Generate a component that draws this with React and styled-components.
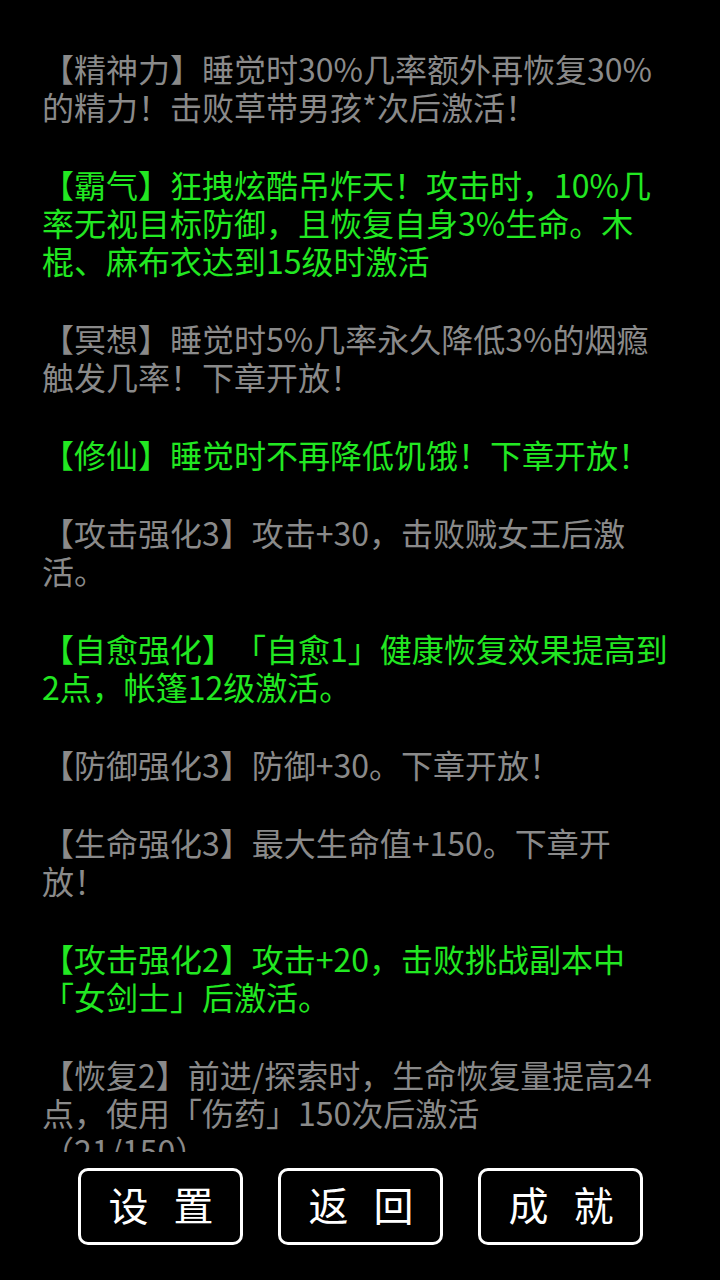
import React from 'react';
import styled, {createGlobalStyle} from 'styled-components';

const GlobalStyle = createGlobalStyle`
    html, body {
        margin: 0;
        padding: 0;
        background: #000;
    }
    * {
        box-sizing: border-box;
    }
`

const Screen = styled.div`
    width: 720px;
    height: 1280px;
    background: #000;
    display: flex;
    flex-direction: column;
    font-family: "Noto Sans CJK SC", "Noto Sans", sans-serif;
`

const TalentList = styled.div`
    flex: 1;
    overflow: hidden;
    padding: 49px 52px 0 42px;
`

const Talent = styled.p`
    margin: 0 0 40px 0;
    font-size: 32px;
    line-height: 38px;
    color: ${({active}) => active ? 'rgb(34, 232, 34)' : 'rgb(138, 138, 138)'};
    word-break: break-all;
    line-break: strict;
    text-spacing-trim: space-all;
`

const Footer = styled.div`
    height: 128px;
    display: flex;
    flex-direction: row;
    justify-content: center;
    gap: 35px;
    padding-top: 16px;
`

const Button = styled.div`
    width: 165px;
    height: 77px;
    border: 3px solid #fff;
    border-radius: 10px;
    display: flex;
    align-items: center;
    justify-content: center;
    color: #fff;
    font-size: 40px;
    line-height: 48px;
    letter-spacing: 8px;
    padding: 0 0 6px 10px;
`

const talents = [
    {active: false, text: '【精神力】睡觉时30%几率额外再恢复30%的精力！击败草带男孩*次后激活！'},
    {active: true, text: '【霸气】狂拽炫酷吊炸天！攻击时，10%几率无视目标防御，且恢复自身3%生命。木棍、麻布衣达到15级时激活'},
    {active: false, text: '【冥想】睡觉时5%几率永久降低3%的烟瘾触发几率！下章开放！'},
    {active: true, text: '【修仙】睡觉时不再降低饥饿！下章开放！'},
    {active: false, text: '【攻击强化3】攻击+30，击败贼女王后激活。'},
    {active: true, text: '【自愈强化】「自愈1」健康恢复效果提高到2点，帐篷12级激活。'},
    {active: false, text: '【防御强化3】防御+30。下章开放！'},
    {active: false, text: '【生命强化3】最大生命值+150。下章开放！'},
    {active: true, text: '【攻击强化2】攻击+20，击败挑战副本中「女剑士」后激活。'},
    {active: false, text: '【恢复2】前进/探索时，生命恢复量提高24点，使用「伤药」150次后激活', extra: '（21/150）'},
    {active: false, text: '【恢复1】前进/探索时，生命恢复量提高12点，使用「伤药」50次后激活'},
];

const App = () => {
    return (
        <Screen>
            <GlobalStyle />
            <TalentList>
                {talents.map((t, i) => (
                    <Talent key={i} active={t.active}>
                        {t.text}
                        {t.extra ? <><br />{t.extra}</> : null}
                    </Talent>
                ))}
            </TalentList>
            <Footer>
                <Button>设 置</Button>
                <Button>返 回</Button>
                <Button>成 就</Button>
            </Footer>
        </Screen>
    )
};

export default App;
